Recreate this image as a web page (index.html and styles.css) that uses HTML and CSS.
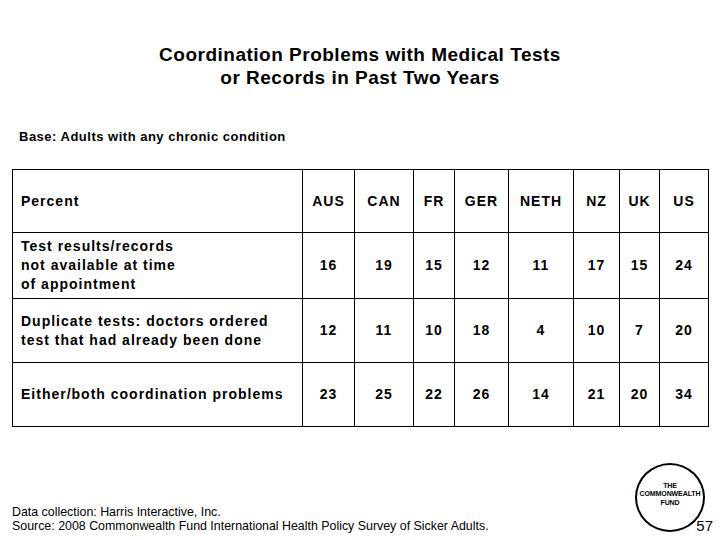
FILE: index.html
```html
<!DOCTYPE html>
<html>
<head>
<meta charset="utf-8">
<link rel="stylesheet" href="styles.css">
</head>
<body>
<div class="slide">
  <h1 class="title">Coordination Problems with Medical Tests<br>or Records in Past Two Years</h1>
  <p class="base">Base: Adults with any chronic condition</p>
  <table class="data">
    <colgroup>
      <col class="c-label">
      <col class="c-aus">
      <col class="c-can">
      <col class="c-fr">
      <col class="c-ger">
      <col class="c-neth">
      <col class="c-nz">
      <col class="c-uk">
      <col class="c-us">
    </colgroup>
    <tr class="r-head">
      <th class="label">Percent</th>
      <th>AUS</th><th>CAN</th><th>FR</th><th>GER</th><th>NETH</th><th>NZ</th><th>UK</th><th>US</th>
    </tr>
    <tr class="r-1">
      <td class="label">Test results/records<br>not available at time<br>of appointment</td>
      <td>16</td><td>19</td><td>15</td><td>12</td><td>11</td><td>17</td><td>15</td><td>24</td>
    </tr>
    <tr class="r-2">
      <td class="label">Duplicate tests: doctors ordered<br>test that had already been done</td>
      <td>12</td><td>11</td><td>10</td><td>18</td><td>4</td><td>10</td><td>7</td><td>20</td>
    </tr>
    <tr class="r-3">
      <td class="label">Either/both coordination problems</td>
      <td>23</td><td>25</td><td>22</td><td>26</td><td>14</td><td>21</td><td>20</td><td>34</td>
    </tr>
  </table>
  <div class="footer">
    <div class="notes">
      <div>Data collection: Harris Interactive, Inc.</div>
      <div>Source: 2008 Commonwealth Fund International Health Policy Survey of Sicker Adults.</div>
    </div>
    <div class="logo">
      <div class="logo-text">THE<br>COMMONWEALTH<br>FUND</div>
      <span class="page-no">57</span>
    </div>
  </div>
</div>
</body>
</html>
```
FILE: styles.css
```css
html, body {
  margin: 0;
  padding: 0;
  background: #fff;
}
.slide {
  width: 720px;
  height: 540px;
  position: relative;
  font-family: "Liberation Sans", Arial, sans-serif;
  color: #000;
  overflow: hidden;
}
.title {
  margin: 0;
  padding-top: 43px;
  font-size: 19px;
  line-height: 23px;
  font-weight: bold;
  letter-spacing: 0.5px;
  text-align: center;
}
.base {
  margin: 0;
  padding-top: 40px;
  padding-left: 19px;
  font-size: 13px;
  line-height: 15px;
  font-weight: bold;
  letter-spacing: 0.5px;
}
.data {
  margin-top: 25px;
  margin-left: 12px;
  border-collapse: collapse;
  table-layout: fixed;
  width: 696px;
  font-size: 14px;
  font-weight: bold;
  letter-spacing: 1px;
}
.data th, .data td {
  border: 1px solid #000;
  padding: 0;
  text-align: center;
  vertical-align: middle;
  font-weight: bold;
  line-height: 19px;
}
.data .label {
  text-align: left;
  padding-left: 8px;
}
.c-label { width: 290px; }
.c-aus { width: 52px; }
.c-can { width: 59px; }
.c-fr { width: 41px; }
.c-ger { width: 54px; }
.c-neth { width: 65px; }
.c-nz { width: 46px; }
.c-uk { width: 40px; }
.c-us { width: 49px; }
.r-head { height: 63px; }
.r-1 { height: 66px; }
.r-2 { height: 64px; }
.r-3 { height: 64px; }
.footer {
  display: flex;
  justify-content: space-between;
  align-items: flex-end;
  padding: 0 15px 0 12px;
  margin-top: 36px;
}
.notes {
  font-size: 12.4px;
  line-height: 14px;
  padding-bottom: 0;
  margin-bottom: -1px;
}
.logo {
  position: relative;
  width: 66px;
  height: 65px;
  border: 2.5px solid #000;
  border-radius: 50%;
  display: flex;
  align-items: center;
  justify-content: center;
}
.logo-text {
  font-size: 7px;
  line-height: 8.5px;
  text-align: center;
  font-weight: bold;
  letter-spacing: -0.1px;
  margin-top: -6px;
}
.page-no {
  position: absolute;
  right: -10px;
  bottom: -3px;
  font-size: 15px;
  line-height: 15px;
  font-weight: normal;
}
```
